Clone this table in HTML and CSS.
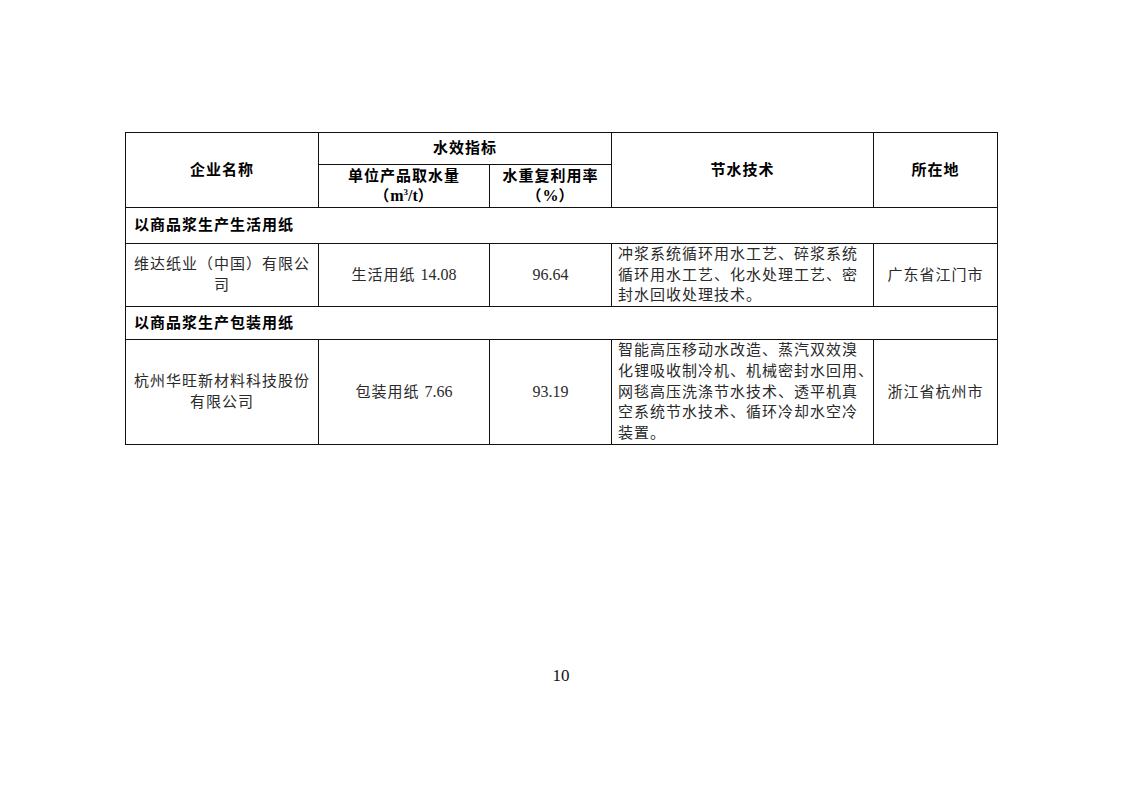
FILE: index.html
```html
<!DOCTYPE html>
<html lang="zh">
<head>
<meta charset="utf-8">
<title>节水技术</title>
<link rel="stylesheet" href="styles.css">
</head>
<body>
<div class="page">
  <table class="tbl">
    <colgroup>
      <col class="c1"><col class="c2"><col class="c3"><col class="c4"><col class="c5">
    </colgroup>
    <tr class="h1">
      <th rowspan="2">企业名称</th>
      <th colspan="2">水效指标</th>
      <th rowspan="2">节水技术</th>
      <th rowspan="2">所在地</th>
    </tr>
    <tr class="h2">
      <th>单位产品取水量<br>（<span class="unit">m<sup>3</sup>/t</span>）</th>
      <th>水重复利用率<br>（<span class="unit">%</span>）</th>
    </tr>
    <tr class="cat cat1">
      <td colspan="5">以商品浆生产生活用纸</td>
    </tr>
    <tr class="row">
      <td class="ctr">维达纸业（中国）有限公司</td>
      <td class="ctr">生活用纸 <span class="num">14.08</span></td>
      <td class="ctr"><span class="num">96.64</span></td>
      <td class="tech">
        <span class="ln">冲浆系统循环用水工艺、碎浆系统</span>
        <span class="ln">循环用水工艺、化水处理工艺、密</span>
        <span class="ln last">封水回收处理技术。</span>
      </td>
      <td class="ctr">广东省江门市</td>
    </tr>
    <tr class="cat cat2">
      <td colspan="5">以商品浆生产包装用纸</td>
    </tr>
    <tr class="row">
      <td class="ctr">杭州华旺新材料科技股份有限公司</td>
      <td class="ctr">包装用纸 <span class="num">7.66</span></td>
      <td class="ctr"><span class="num">93.19</span></td>
      <td class="tech">
        <span class="ln">智能高压移动水改造、蒸汽双效溴</span>
        <span class="ln last">化锂吸收制冷机、机械密封水回用、</span>
        <span class="ln">网毯高压洗涤节水技术、透平机真</span>
        <span class="ln">空系统节水技术、循环冷却水空冷</span>
        <span class="ln last">装置。</span>
      </td>
      <td class="ctr">浙江省杭州市</td>
    </tr>
  </table>
  <div class="pageno">10</div>
</div>
</body>
</html>
```

FILE: styles.css
```css
html, body {
  margin: 0;
  padding: 0;
  background: #ffffff;
}
body {
  width: 1123px;
  height: 794px;
  overflow: hidden;
  font-family: "Liberation Serif", "Noto Sans CJK SC", serif;
  color: #2a2a2a;
}
.page {
  padding: 132px 0 0 125px;
}
.tbl {
  border-collapse: collapse;
  table-layout: fixed;
  width: 872px;
  font-size: 15px;
  letter-spacing: 1px;
}
.c1 { width: 193px; }
.c2 { width: 171px; }
.c3 { width: 122px; }
.c4 { width: 262px; }
.c5 { width: 124px; }
.tbl th, .tbl td {
  border: 1px solid #111;
  padding: 0 6px;
  line-height: 20.7px;
}
.tbl th {
  font-weight: bold;
  color: #000;
  text-align: center;
  vertical-align: middle;
}
.h1 { height: 32px; }
.h2 { height: 43px; }
.h2 th { line-height: 19px; padding-top: 1px; }
.unit { font-size: 16px; letter-spacing: 0; }
.h2 sup { font-size: 9px; vertical-align: 6px; line-height: 0; letter-spacing: 0; }
.cat td {
  font-weight: bold;
  color: #000;
  padding-left: 8px;
}
.cat1 { height: 36px; }
.cat2 { height: 33px; }
.ctr {
  text-align: center;
  vertical-align: middle;
}
.num {
  font-size: 16px;
  letter-spacing: 0;
}
.tech {
  vertical-align: middle;
  padding: 0 4px 0 7px;
}
.ln {
  display: block;
  width: 239px;
  white-space: nowrap;
  letter-spacing: 0;
  text-align: justify;
  text-align-last: justify;
  text-justify: inter-character;
}
.ln.last {
  letter-spacing: 1px;
  text-align: left;
  text-align-last: left;
}
.pageno {
  width: 872px;
  text-align: center;
  margin-top: 221px;
  font-size: 17px;
  color: #111;
}
```
